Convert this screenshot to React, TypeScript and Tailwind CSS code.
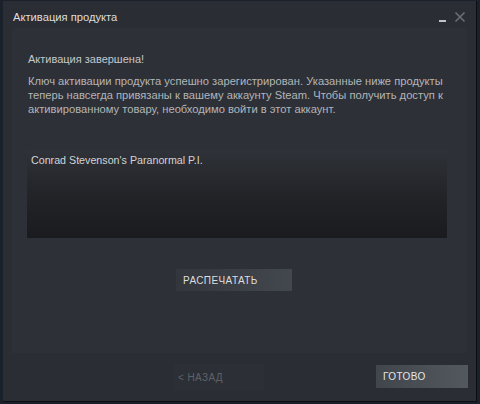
import React from "react";

export default function App() {
  const font = { fontFamily: '"Liberation Sans", Arial, sans-serif' };
  return (
    <div
      className="w-[480px] h-[404px] bg-[#1a212b] pl-[3px] pt-[1px] overflow-hidden"
      style={font}
    >
      <div className="w-[474px] h-[401px] bg-[#2a2d33] border-r border-b border-[#0c0d10] flex flex-col">
        {/* title bar */}
        <div className="h-[27px] flex items-start justify-between pl-[10px] pr-[10px]">
          <div className="text-[11.2px]/[14px] text-[#dcdedf] pt-[9px]">Активация продукта</div>
          <div className="flex items-start gap-[6px] pt-[10px]">
            <svg width="10" height="12" viewBox="0 0 10 12">
              <rect x="1" y="9" width="7" height="2" fill="#c0c2c5" />
            </svg>
            <svg width="12" height="12" viewBox="0 0 12 12">
              <path d="M1.5 1.5 L10.5 10.5 M10.5 1.5 L1.5 10.5" stroke="#6b6e73" strokeWidth="1.6" />
            </svg>
          </div>
        </div>
        {/* content panel */}
        <div className="mx-[9px] h-[325px] bg-[#2d3037] flex flex-col pl-[16px] pr-[10px]">
          <div className="text-[11px]/[14px] text-[#c5c7c9] pt-[24px]">Активация завершена!</div>
          <div className="text-[11.18px]/[14px] text-[#b3b5b8] mt-[8px] whitespace-nowrap">
            Ключ активации продукта успешно зарегистрирован. Указанные ниже продукты
            <br />
            теперь навсегда привязаны к вашему аккаунту Steam. Чтобы получить доступ к
            <br />
            активированному товару, необходимо войти в этот аккаунт.
          </div>
          <div className="mt-[34px] ml-[-1px] w-[420px] h-[88px] bg-gradient-to-b from-[#2f3238] via-[#222428] to-[#1a1b1e] px-[4px] pt-[3px]">
            <div className="text-[10.7px]/[14px] text-[#d2d4d6]">Conrad Stevenson's Paranormal P.I.</div>
          </div>
          <div className="flex mt-[31px] ml-[148px]">
            <div className="w-[116px] h-[22px] bg-gradient-to-r from-[#33363d] to-[#43474e] flex items-center pl-[7px] text-[10px] text-[#dcdedf] tracking-[0.4px]">
              РАСПЕЧАТАТЬ
            </div>
          </div>
        </div>
        {/* footer */}
        <div className="flex items-start mt-[11px]">
          <div className="ml-[171px] w-[90px] h-[26px] bg-[#2c2f35] flex items-center pl-[4px] text-[10px] text-[#5f6369] tracking-[0.4px]">
            &lt; НАЗАД
          </div>
          <div className="ml-[112px] mt-[1px] w-[92px] h-[23px] bg-gradient-to-r from-[#41454c] to-[#53575e] flex items-center pl-[7px] text-[10px] text-[#e4e6e8] tracking-[0.4px]">
            ГОТОВО
          </div>
        </div>
      </div>
    </div>
  );
}
